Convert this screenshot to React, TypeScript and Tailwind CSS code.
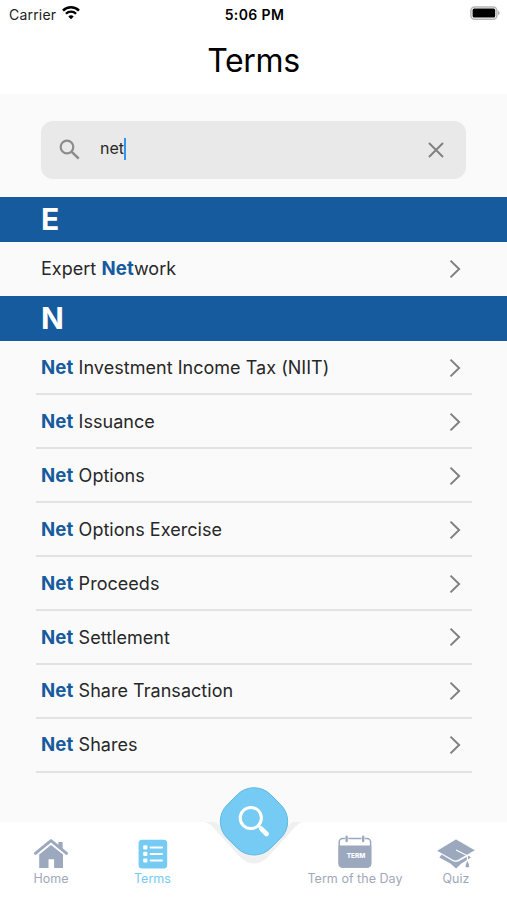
import React, { useState } from 'react';
import { clsx } from 'clsx';

const sections = [
  { letter: 'E', terms: ['Expert Network'] },
  {
    letter: 'N',
    terms: [
      'Net Investment Income Tax (NIIT)',
      'Net Issuance',
      'Net Options',
      'Net Options Exercise',
      'Net Proceeds',
      'Net Settlement',
      'Net Share Transaction',
      'Net Shares',
    ],
  },
];

const WifiIcon = () => (
  <svg viewBox="0 0 18 14" className="w-[18px] h-[14px] -mt-0.5" fill="none" stroke="#000">
    <path d="M1 4.6a11.4 11.4 0 0 1 16 0" strokeWidth="2.6" />
    <path d="M3.9 7.8a7.2 7.2 0 0 1 10.2 0" strokeWidth="2.3" />
    <path d="M9 13.2 6.3 10.5a3.8 3.8 0 0 1 5.4 0Z" fill="#000" stroke="none" />
  </svg>
);

const BatteryIcon = () => (
  <svg viewBox="0 0 30 14" className="w-[30px] h-[14px] -mt-0.5">
    <rect x="0.9" y="0.9" width="26" height="12.4" rx="3.8" fill="#fff" stroke="#b5b5b5" strokeWidth="1.5" />
    <rect x="2.6" y="2.6" width="22.6" height="9" rx="1.6" fill="#000" />
    <path d="M28.1 4.8c1.9.7 1.9 3.7 0 4.4Z" fill="#aaa" />
  </svg>
);

const HomeIcon = () => (
  <svg viewBox="0 0 36 32" className="w-9 h-8" fill="#9ba8be">
    <path d="M25.4 5h4.2v8.4l-4.2-3.6Z" />
    <path d="M2.4 16.4 18 3.7l15.6 12.7" fill="none" stroke="#9ba8be" strokeWidth="2.9" strokeLinecap="round" strokeLinejoin="round" />
    <path d="M6.2 17.6 18 8l12 9.6V31h-8.9v-8.8h-5.6V31H6.2Z" />
    <path d="M5 17.1 18 6.6l13 10.5" fill="none" stroke="#fff" />
  </svg>
);

const ListIcon = () => (
  <svg viewBox="0 0 30 30" className="w-[30px] h-[30px]">
    <rect x="0.6" y="0.7" width="28.6" height="28.7" rx="3.5" fill="#75cbf3" />
    <g fill="#fff">
      <rect x="5.2" y="6.2" width="4.2" height="4.2" rx="1" />
      <rect x="5.2" y="12.8" width="4.2" height="4.2" rx="1" />
      <rect x="5.2" y="19.4" width="4.2" height="4.2" rx="1" />
      <rect x="11.6" y="7.4" width="13.4" height="2" rx="1" />
      <rect x="11.6" y="14" width="13.4" height="2" rx="1" />
      <rect x="11.6" y="20.6" width="13.4" height="2" rx="1" />
    </g>
  </svg>
);

const CalendarIcon = () => (
  <svg viewBox="0 0 34 34" className="w-[34px] h-[34px]">
    <rect x="1.2" y="3.6" width="31.4" height="28.4" rx="3.6" fill="none" stroke="#9ba8be" strokeWidth="1.5" />
    <path d="M.5 10.4h32.8v18q0 4.3-4.3 4.3H4.8q-4.3 0-4.3-4.3Z" fill="#9ba8be" />
    <path d="M8.6 1.4v5M25.2 1.4v5" stroke="#fff" strokeWidth="3.4" />
    <path d="M8.6 1.8v4.2M25.2 1.8v4.2" stroke="#9ba8be" strokeWidth="2.4" strokeLinecap="round" />
    <text x="18" y="23" textAnchor="middle" fontSize="6.8" fontWeight="800" fill="#fff" textLength="18.5" lengthAdjust="spacingAndGlyphs">
      TERM
    </text>
  </svg>
);

const CapIcon = () => (
  <svg viewBox="0 0 40 31" className="w-10 h-[31px]" fill="#9ba8be">
    <path d="M3.4 19.4 5.6 16.6 17 23.2q3 1.2 6 0l9.6-5.4 2.4 1.6-9.6 6.1-5.3 5-5.7-4.9Z" />
    <path d="M20 1 39.5 12.3 22 22.2q-2.2 1.3-4.4.3L.5 12.8Z" stroke="#fff" strokeWidth="0.8" />
    <path d="M20 12 31.4 17.8V23" fill="none" stroke="#fff" strokeWidth="1.2" />
    <path d="M31.4 23q-1.9 3-2 6.2h4q-.2-3.2-2-6.2Z" />
  </svg>
);

const Chevron = () => (
  <svg viewBox="0 0 12 20" className="w-3 h-5" fill="none" stroke="#808080" strokeWidth="2">
    <path d="m1.5 1.6 8.6 8.4-8.6 8.4" />
  </svg>
);

const Highlight = ({ text, query }: { text: string; query: string }) => {
  const at = text.toLowerCase().indexOf(query.toLowerCase());
  if (!query || at < 0) return <>{text}</>;

  return (
    <>
      {text.slice(0, at)}
      <b className="text-[18.6px] font-bold tracking-[0.15px] text-[#165b9d]">{text.slice(at, at + query.length)}</b>
      {text.slice(at + query.length)}
    </>
  );
};

const tabs = [
  { name: 'Home', Icon: HomeIcon, className: 'w-[102px]' },
  { name: 'Terms', Icon: ListIcon, className: 'w-[101px]' },
  { name: 'Term of the Day', Icon: CalendarIcon, className: 'w-[102px] ml-[101px]' },
  { name: 'Quiz', Icon: CapIcon, className: 'w-[100px]' },
];

export default function App() {
  const [query, setQuery] = useState('net');

  return (
    <div className="flex h-[900px] w-[507px] flex-col overflow-hidden bg-[#fafafa] font-['Inter',sans-serif] text-[#272727]">
      <header className="h-[94px] shrink-0 bg-white text-black">
        {/* Status bar */}
        <div className="grid h-7 grid-cols-3 items-center pl-[9px] pr-[7px]">
          <div className="flex items-center gap-1.5 text-[14px] tracking-[0.2px] text-[#222]">
            Carrier <WifiIcon />
          </div>
          <div className="text-center text-[14px] font-semibold tracking-[0.4px]">5:06 PM</div>
          <div className="flex justify-end"><BatteryIcon /></div>
        </div>
        <h1 className="mt-[13px] text-center text-[32px] leading-10 tracking-[-0.4px]">Terms</h1>
      </header>

      {/* Search */}
      <div className="mx-[41px] mt-[27px] flex h-[58px] shrink-0 items-center rounded-xl bg-[#e9e9e9] pl-[18px] pr-[21px]">
        <svg viewBox="0 0 22 22" className="h-[22px] w-[22px]" fill="none" stroke="#8c8c8c">
          <circle cx="8" cy="8" r="6.3" strokeWidth="2.2" />
          <path d="m12.8 12.8 6.9 6.9" strokeWidth="2.6" />
        </svg>
        <div className="ml-[19px] flex flex-1 items-center text-[16px]">
          <span className="pb-1">{query}</span>
          <span className="mb-0.5 h-[22px] w-0.5 bg-[#3294ec]" />
        </div>
        <button onClick={() => setQuery('')} aria-label="Clear">
          <svg viewBox="0 0 18 18" className="h-[18px] w-[18px]" fill="none" stroke="#808080" strokeWidth="1.9">
            <path d="m2 2 14 14M16 2 2 16" />
          </svg>
        </button>
      </div>

      {/* Results */}
      <main className="mt-[18.4px] h-[624.6px] shrink-0 overflow-hidden">
        {sections.map(({ letter, terms }, s) => (
          <section key={letter}>
            <h2 className="flex h-[45px] items-center bg-[#165b9d] pl-[41px] text-[30px] font-bold text-white">{letter}</h2>
            <ul className="pl-9 pr-[35px]">
              {terms.map(term => (
                <li
                  key={term}
                  className={clsx(
                    'flex h-[53.95px] items-center justify-between pl-[5px] pr-[11px] text-[18px] tracking-[0.03px]',
                    s > 0 && 'border-b-2 border-[#e2e2e2] pt-px'
                  )}
                >
                  <span><Highlight text={term} query={query} /></span>
                  <Chevron />
                </li>
              ))}
            </ul>
          </section>
        ))}
      </main>

      {/* Tab bar */}
      <nav className="relative flex h-[78px] shrink-0 bg-white">
        {tabs.map(({ name, Icon, className }) => (
          <a key={name} className={clsx('flex flex-col items-center', className)}>
            <span className="mb-0.5 flex h-[47px] items-end justify-center"><Icon /></span>
            <span
              className={clsx(
                'whitespace-nowrap text-[12.5px] leading-4 tracking-[0.03px]',
                name === 'Terms' ? 'text-[#75cbf3]' : 'text-[#a0a9b9]'
              )}
            >
              {name}
            </span>
          </a>
        ))}
        <button className="absolute left-[203px] top-[-38px]" aria-label="Search">
          <svg viewBox="0 0 102 82" className="h-[82px] w-[102px]">
            <path d="M0 38q5 0 9 4l29 32q13 11 26 0l29-32q4-4 9-4Z" fill="#f0f0f0" />
            <path d="M11 38q3 0 6 4l22 26q12 9 24 0l22-26q3-4 6-4Z" fill="#fafafa" />
            <rect x="20.3" y="6.7" width="61.4" height="61.4" rx="23.5" transform="rotate(45 51 37.4)" fill="#75cbf3" stroke="#5bb6df" strokeWidth="0.9" />
            <circle cx="47.8" cy="34" r="10.6" fill="none" stroke="#fff" strokeWidth="3" />
            <path d="m55.3 41.6 3.2 3.2" stroke="#fff" strokeWidth="3" />
            <path d="m58.4 44.8 5.2 5.2" stroke="#fff" strokeWidth="4.6" strokeLinecap="round" />
          </svg>
        </button>
      </nav>
    </div>
  );
}
